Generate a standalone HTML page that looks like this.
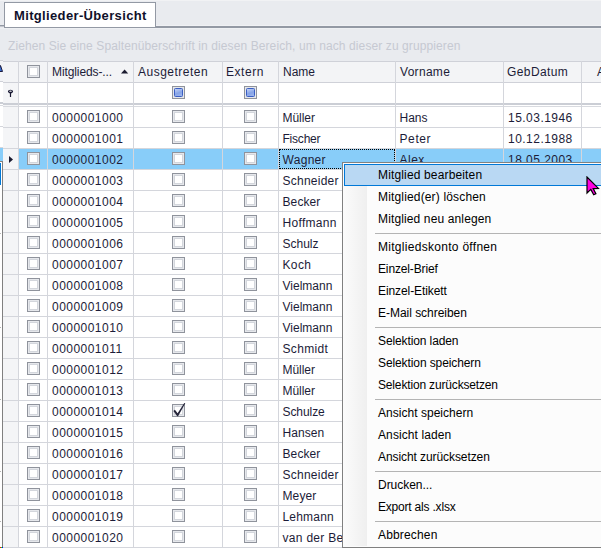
<!DOCTYPE html><html><head><meta charset="utf-8"><style>
*{margin:0;padding:0;box-sizing:border-box}
html,body{width:601px;height:548px;overflow:hidden;background:#e9ebef;font-family:"Liberation Sans",sans-serif;position:relative}
.a{position:absolute}
.t{position:absolute;white-space:nowrap;font-size:12px;line-height:14px;color:#1c1c38}
.cb{position:absolute;width:13px;height:13px;border:1px solid #8f939c;background:#fff;box-shadow:inset 0 0 0 1px #e6e8ec, inset 0 0 0 2px #d3d6dc}
.hl{position:absolute;background:#d4d6dc}
.mi{position:absolute;left:378px;font-size:12px;letter-spacing:0px;line-height:14px;color:#000;white-space:nowrap}
.sep{position:absolute;left:375px;width:226px;height:1px;background:#b4b4b4}
</style></head><body><div class="a" style="left:0;top:0;width:601px;height:1px;background:#f1f2f4"></div><div class="a" style="left:156px;top:25px;width:445px;height:1px;background:#f0f1f4"></div><div class="a" style="left:0;top:25px;width:4px;height:1px;background:#9399a4"></div><div class="a" style="left:0;top:26px;width:4px;height:1px;background:#c4c7ce"></div><div class="a" style="left:155px;top:26px;width:446px;height:2px;background:#9399a4"></div><div class="a" style="left:4px;top:2px;width:152px;height:26px;background:#fff;border:1px solid #9399a4"></div><div class="t" style="left:14px;top:8px;font-weight:bold;font-size:13px;line-height:15px;letter-spacing:0.35px;color:#10102a">Mitglieder-Übersicht</div><div class="a" style="left:0;top:28px;width:601px;height:1px;background:#eef0f3"></div><div class="t" style="left:8px;top:39px;color:#c6c9d2;letter-spacing:0.1px">Ziehen Sie eine Spaltenüberschrift in diesen Bereich, um nach dieser zu gruppieren</div><div class="a" style="left:0;top:60px;width:3px;height:1px;background:#d0d2d8"></div><div class="a" style="left:3px;top:61px;width:598px;height:487px;background:#fff"></div><div class="a" style="left:3px;top:61px;width:598px;height:22px;background:#f3f4f6"></div><div class="hl" style="left:3px;top:61px;width:598px;height:1px;background:#cfd1d8"></div><div class="hl" style="left:3px;top:82px;width:598px;height:1px;background:#cfd1d8"></div><div class="a" style="left:3px;top:83px;width:15px;height:465px;background:#f4f5f7"></div><div class="hl" style="left:3px;top:103px;width:598px;height:2px;background:#cbced5"></div><div class="hl" style="left:3px;top:106px;width:598px;height:1px;background:#d8dadf"></div><div class="a" style="left:19px;top:149px;width:582px;height:20px;background:#88cdf9"></div><div class="hl" style="left:3px;top:127px;width:598px;height:1px"></div><div class="hl" style="left:3px;top:148px;width:598px;height:1px"></div><div class="hl" style="left:3px;top:169px;width:598px;height:1px"></div><div class="hl" style="left:3px;top:190px;width:598px;height:1px"></div><div class="hl" style="left:3px;top:211px;width:598px;height:1px"></div><div class="hl" style="left:3px;top:232px;width:598px;height:1px"></div><div class="hl" style="left:3px;top:253px;width:598px;height:1px"></div><div class="hl" style="left:3px;top:274px;width:598px;height:1px"></div><div class="hl" style="left:3px;top:295px;width:598px;height:1px"></div><div class="hl" style="left:3px;top:316px;width:598px;height:1px"></div><div class="hl" style="left:3px;top:337px;width:598px;height:1px"></div><div class="hl" style="left:3px;top:358px;width:598px;height:1px"></div><div class="hl" style="left:3px;top:379px;width:598px;height:1px"></div><div class="hl" style="left:3px;top:400px;width:598px;height:1px"></div><div class="hl" style="left:3px;top:421px;width:598px;height:1px"></div><div class="hl" style="left:3px;top:442px;width:598px;height:1px"></div><div class="hl" style="left:3px;top:463px;width:598px;height:1px"></div><div class="hl" style="left:3px;top:484px;width:598px;height:1px"></div><div class="hl" style="left:3px;top:505px;width:598px;height:1px"></div><div class="hl" style="left:3px;top:526px;width:598px;height:1px"></div><div class="hl" style="left:3px;top:547px;width:598px;height:1px"></div><div class="hl" style="left:18px;top:61px;width:1px;height:487px"></div><div class="hl" style="left:47px;top:61px;width:1px;height:487px"></div><div class="hl" style="left:133px;top:61px;width:1px;height:487px"></div><div class="hl" style="left:222px;top:61px;width:1px;height:487px"></div><div class="hl" style="left:278px;top:61px;width:1px;height:487px"></div><div class="hl" style="left:395px;top:61px;width:1px;height:487px"></div><div class="hl" style="left:503px;top:61px;width:1px;height:487px"></div><div class="hl" style="left:581px;top:61px;width:1px;height:487px"></div><div class="t" style="left:52px;top:65px;letter-spacing:-0.1px">Mitglieds-...</div><div class="t" style="left:138px;top:65px;letter-spacing:0.5px">Ausgetreten</div><div class="t" style="left:226px;top:65px;letter-spacing:0.55px">Extern</div><div class="t" style="left:283px;top:65px;letter-spacing:0px">Name</div><div class="t" style="left:400px;top:65px;letter-spacing:0.3px">Vorname</div><div class="t" style="left:507px;top:65px;letter-spacing:0.4px">GebDatum</div><div class="t" style="left:597px;top:65px;letter-spacing:0.3px">Austritt</div><svg class="a" style="left:121px;top:69px" width="8" height="5"><path d="M0 4.6 L3.6 0.6 L7.2 4.6Z" fill="#1c1c30"/></svg><div class="cb" style="left:27px;top:65px"></div><div class="cb" style="left:172px;top:86px"><div class="a" style="left:1px;top:1px;width:9px;height:9px;border:1px solid #3a5ec4;border-radius:1.5px;background:linear-gradient(160deg,#c3d3f6,#86a3e7 55%,#9fb8ee)"></div></div><div class="cb" style="left:244px;top:86px"><div class="a" style="left:1px;top:1px;width:9px;height:9px;border:1px solid #3a5ec4;border-radius:1.5px;background:linear-gradient(160deg,#c3d3f6,#86a3e7 55%,#9fb8ee)"></div></div><svg class="a" style="left:7px;top:89px" width="7" height="9"><path d="M0.9 2.4 Q0.9 0.8 3.5 0.8 Q6.1 0.8 6.1 2.4 Q6.1 3.3 4.1 4.4 L4.1 7.9 L2.9 7.9 L2.9 4.4 Q0.9 3.3 0.9 2.4Z" fill="#151530"/><ellipse cx="3.5" cy="2.2" rx="1.3" ry="0.6" fill="#f4f5f7"/></svg><svg class="a" style="left:9px;top:156px" width="5" height="8"><path d="M0 0 L4 3.5 L0 7Z" fill="#1a1a30"/></svg><div class="cb" style="left:27px;top:110px"></div><div class="cb" style="left:172px;top:110px"></div><div class="cb" style="left:244px;top:110px"></div><div class="t" style="left:52px;top:111px;letter-spacing:0.47px">0000001000</div><div class="t" style="left:282.5px;top:111px;letter-spacing:-0.04px">Müller</div><div class="t" style="left:399.5px;top:111px;letter-spacing:0px">Hans</div><div class="t" style="left:508px;top:111px;letter-spacing:0.47px">15.03.1946</div><div class="cb" style="left:27px;top:131px"></div><div class="cb" style="left:172px;top:131px"></div><div class="cb" style="left:244px;top:131px"></div><div class="t" style="left:52px;top:132px;letter-spacing:0.47px">0000001001</div><div class="t" style="left:282.5px;top:132px;letter-spacing:-0.217px">Fischer</div><div class="t" style="left:399.5px;top:132px;letter-spacing:0.6px">Peter</div><div class="t" style="left:508px;top:132px;letter-spacing:0.47px">10.12.1988</div><div class="cb" style="left:27px;top:152px"></div><div class="cb" style="left:172px;top:152px"></div><div class="cb" style="left:244px;top:152px"></div><div class="t" style="left:52px;top:153px;letter-spacing:0.47px">0000001002</div><div class="t" style="left:282.5px;top:153px;letter-spacing:0.3px">Wagner</div><div class="t" style="left:399.5px;top:153px;letter-spacing:0.5px">Alex</div><div class="t" style="left:508px;top:153px;letter-spacing:0.47px">18.05.2003</div><div class="cb" style="left:27px;top:173px"></div><div class="cb" style="left:172px;top:173px"></div><div class="cb" style="left:244px;top:173px"></div><div class="t" style="left:52px;top:174px;letter-spacing:0.47px">0000001003</div><div class="t" style="left:282.5px;top:174px;letter-spacing:0.25px">Schneider</div><div class="cb" style="left:27px;top:194px"></div><div class="cb" style="left:172px;top:194px"></div><div class="cb" style="left:244px;top:194px"></div><div class="t" style="left:52px;top:195px;letter-spacing:0.47px">0000001004</div><div class="t" style="left:282.5px;top:195px;letter-spacing:0.1px">Becker</div><div class="cb" style="left:27px;top:215px"></div><div class="cb" style="left:172px;top:215px"></div><div class="cb" style="left:244px;top:215px"></div><div class="t" style="left:52px;top:216px;letter-spacing:0.47px">0000001005</div><div class="t" style="left:282.5px;top:216px;letter-spacing:0.314px">Hoffmann</div><div class="cb" style="left:27px;top:236px"></div><div class="cb" style="left:172px;top:236px"></div><div class="cb" style="left:244px;top:236px"></div><div class="t" style="left:52px;top:237px;letter-spacing:0.47px">0000001006</div><div class="t" style="left:282.5px;top:237px;letter-spacing:0.0px">Schulz</div><div class="cb" style="left:27px;top:257px"></div><div class="cb" style="left:172px;top:257px"></div><div class="cb" style="left:244px;top:257px"></div><div class="t" style="left:52px;top:258px;letter-spacing:0.47px">0000001007</div><div class="t" style="left:282.5px;top:258px;letter-spacing:0.367px">Koch</div><div class="cb" style="left:27px;top:278px"></div><div class="cb" style="left:172px;top:278px"></div><div class="cb" style="left:244px;top:278px"></div><div class="t" style="left:52px;top:279px;letter-spacing:0.47px">0000001008</div><div class="t" style="left:282.5px;top:279px;letter-spacing:0.0px">Vielmann</div><div class="cb" style="left:27px;top:299px"></div><div class="cb" style="left:172px;top:299px"></div><div class="cb" style="left:244px;top:299px"></div><div class="t" style="left:52px;top:300px;letter-spacing:0.47px">0000001009</div><div class="t" style="left:282.5px;top:300px;letter-spacing:0.0px">Vielmann</div><div class="cb" style="left:27px;top:320px"></div><div class="cb" style="left:172px;top:320px"></div><div class="cb" style="left:244px;top:320px"></div><div class="t" style="left:52px;top:321px;letter-spacing:0.47px">0000001010</div><div class="t" style="left:282.5px;top:321px;letter-spacing:0.0px">Vielmann</div><div class="cb" style="left:27px;top:341px"></div><div class="cb" style="left:172px;top:341px"></div><div class="cb" style="left:244px;top:341px"></div><div class="t" style="left:52px;top:342px;letter-spacing:0.47px">0000001011</div><div class="t" style="left:282.5px;top:342px;letter-spacing:0.317px">Schmidt</div><div class="cb" style="left:27px;top:362px"></div><div class="cb" style="left:172px;top:362px"></div><div class="cb" style="left:244px;top:362px"></div><div class="t" style="left:52px;top:363px;letter-spacing:0.47px">0000001012</div><div class="t" style="left:282.5px;top:363px;letter-spacing:-0.06px">Müller</div><div class="cb" style="left:27px;top:383px"></div><div class="cb" style="left:172px;top:383px"></div><div class="cb" style="left:244px;top:383px"></div><div class="t" style="left:52px;top:384px;letter-spacing:0.47px">0000001013</div><div class="t" style="left:282.5px;top:384px;letter-spacing:-0.06px">Müller</div><div class="cb" style="left:27px;top:404px"></div><div class="cb" style="left:172px;top:404px"></div><div class="cb" style="left:244px;top:404px"></div><div class="t" style="left:52px;top:405px;letter-spacing:0.47px">0000001014</div><div class="t" style="left:282.5px;top:405px;letter-spacing:-0.067px">Schulze</div><div class="cb" style="left:27px;top:425px"></div><div class="cb" style="left:172px;top:425px"></div><div class="cb" style="left:244px;top:425px"></div><div class="t" style="left:52px;top:426px;letter-spacing:0.47px">0000001015</div><div class="t" style="left:282.5px;top:426px;letter-spacing:0.04px">Hansen</div><div class="cb" style="left:27px;top:446px"></div><div class="cb" style="left:172px;top:446px"></div><div class="cb" style="left:244px;top:446px"></div><div class="t" style="left:52px;top:447px;letter-spacing:0.47px">0000001016</div><div class="t" style="left:282.5px;top:447px;letter-spacing:0.1px">Becker</div><div class="cb" style="left:27px;top:467px"></div><div class="cb" style="left:172px;top:467px"></div><div class="cb" style="left:244px;top:467px"></div><div class="t" style="left:52px;top:468px;letter-spacing:0.47px">0000001017</div><div class="t" style="left:282.5px;top:468px;letter-spacing:0.25px">Schneider</div><div class="cb" style="left:27px;top:488px"></div><div class="cb" style="left:172px;top:488px"></div><div class="cb" style="left:244px;top:488px"></div><div class="t" style="left:52px;top:489px;letter-spacing:0.47px">0000001018</div><div class="t" style="left:282.5px;top:489px;letter-spacing:0.125px">Meyer</div><div class="cb" style="left:27px;top:509px"></div><div class="cb" style="left:172px;top:509px"></div><div class="cb" style="left:244px;top:509px"></div><div class="t" style="left:52px;top:510px;letter-spacing:0.47px">0000001019</div><div class="t" style="left:282.5px;top:510px;letter-spacing:0.2px">Lehmann</div><div class="cb" style="left:27px;top:530px"></div><div class="cb" style="left:172px;top:530px"></div><div class="cb" style="left:244px;top:530px"></div><div class="t" style="left:52px;top:531px;letter-spacing:0.47px">0000001020</div><div class="t" style="left:282.5px;top:531px;letter-spacing:0.3px">van der Berg</div><svg class="a" style="left:172px;top:401px" width="16" height="18"><path d="M1.4 9.9 L5.2 15.3 L6.2 15.1 L13.3 2.3 L12.3 1.9 L5.6 12.3 L2.9 8.7 Z" fill="#25253a"/></svg><div class="a" style="left:279px;top:149px;width:116px;height:20px;border:1px dotted #000"></div><div class="a" style="left:0;top:61px;width:3px;height:487px;background:#fff"></div><div class="a" style="left:0;top:61px;width:3px;height:20px;background:#f3f4f6"></div><svg class="a" style="left:0;top:65px" width="3" height="7"><path d="M-2 6.5 L0.5 0.5 L2.5 6.5Z" fill="#3a6fd0" stroke="#1c1c40" stroke-width="1"/></svg><div class="a" style="left:0;top:81px;width:3px;height:1px;background:#cfd1d8"></div><div class="a" style="left:0;top:102px;width:3px;height:1px;background:#cbced5"></div><div class="a" style="left:0;top:103px;width:3px;height:1px;background:#cbced5"></div><div class="a" style="left:0;top:105px;width:3px;height:1px;background:#d8dadf"></div><div class="a" style="left:0;top:126px;width:3px;height:1px;background:#d4d6dc"></div><div class="a" style="left:0;top:147px;width:3px;height:1px;background:#d4d6dc"></div><div class="a" style="left:0;top:148px;width:3px;height:13px;background:#88cdf9"></div><div class="a" style="left:0;top:161px;width:3px;height:387px;background:#fff;border-right:1px solid #808080;border-top:1px solid #808080"></div><div class="a" style="left:0;top:163px;width:1px;height:22px;background:#0078d7"></div><div class="a" style="left:0;top:233px;width:1px;height:1px;background:#b4b4b4"></div><div class="a" style="left:0;top:327px;width:1px;height:1px;background:#b4b4b4"></div><div class="a" style="left:0;top:399px;width:1px;height:1px;background:#b4b4b4"></div><div class="a" style="left:0;top:471px;width:1px;height:1px;background:#b4b4b4"></div><div class="a" style="left:0;top:521px;width:1px;height:1px;background:#b4b4b4"></div><div class="a" style="left:0px;top:547px;width:1px;height:1px;background:#ff0000"></div><div class="a" style="left:1px;top:547px;width:1px;height:1px;background:#00ff00"></div><div class="a" style="left:2px;top:547px;width:1px;height:1px;background:#0000ff"></div><div class="a" style="left:342px;top:162px;width:270px;height:386px;background:#fcfcfc;border:1px solid #808080;border-right:none"></div><div class="a" style="left:344px;top:164px;width:23px;height:382px;background:linear-gradient(90deg,#fbfbfb,#efefef)"></div><div class="a" style="left:344px;top:164px;width:260px;height:22px;background:#b9d8f3;border:1px solid #0078d7"></div><div class="mi" style="top:168px;letter-spacing:0.15px">Mitglied bearbeiten</div><div class="mi" style="top:190px;letter-spacing:0.16px">Mitglied(er) löschen</div><div class="mi" style="top:212px;letter-spacing:0.13px">Mitglied neu anlegen</div><div class="sep" style="top:233px"></div><div class="mi" style="top:240px;letter-spacing:0.29px">Mitgliedskonto öffnen</div><div class="mi" style="top:262px;letter-spacing:-0.14px">Einzel-Brief</div><div class="mi" style="top:284px;letter-spacing:-0.09px">Einzel-Etikett</div><div class="mi" style="top:306px;letter-spacing:-0.03px">E-Mail schreiben</div><div class="sep" style="top:327px"></div><div class="mi" style="top:334px;letter-spacing:-0.11px">Selektion laden</div><div class="mi" style="top:356px;letter-spacing:-0.1px">Selektion speichern</div><div class="mi" style="top:378px;letter-spacing:-0.16px">Selektion zurücksetzen</div><div class="sep" style="top:399px"></div><div class="mi" style="top:406px;letter-spacing:0.03px">Ansicht speichern</div><div class="mi" style="top:428px;letter-spacing:0.1px">Ansicht laden</div><div class="mi" style="top:450px;letter-spacing:-0.08px">Ansicht zurücksetzen</div><div class="sep" style="top:471px"></div><div class="mi" style="top:478px;letter-spacing:-0.04px">Drucken...</div><div class="mi" style="top:500px;letter-spacing:-0.2px">Export als .xlsx</div><div class="sep" style="top:521px"></div><div class="mi" style="top:528px;letter-spacing:0.16px">Abbrechen</div><svg class="a" style="left:585.5px;top:176px" width="16" height="22"><path d="M1 1 L1 17 L4.8 13.4 L7.7 18.8 L9.9 17.7 L7.2 12.6 L12.4 12.4 Z" fill="#ff00e0" stroke="#000" stroke-width="1.2" stroke-linejoin="miter"/></svg></body></html>
